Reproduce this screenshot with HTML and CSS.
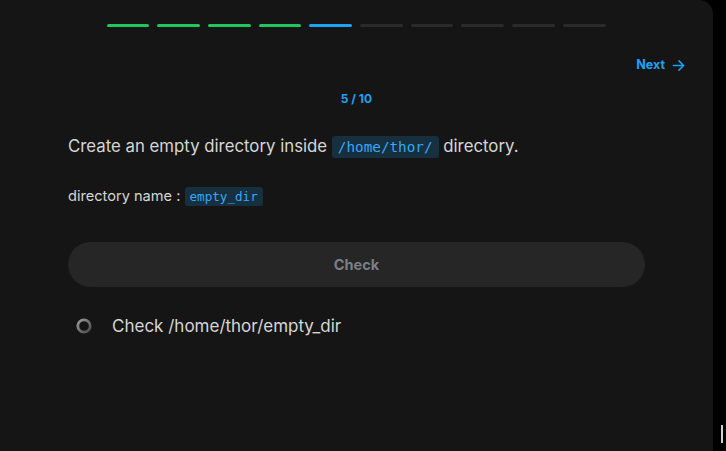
FILE: index.html
```html
<!DOCTYPE html>
<html lang="en">
<head>
<meta charset="utf-8">
<title>Task 5 / 10</title>
<link rel="stylesheet" href="styles.css">
</head>
<body>
<div class="page">
  <main class="panel">
    <div class="progress">
      <span class="bar done"></span>
      <span class="bar done"></span>
      <span class="bar done"></span>
      <span class="bar done"></span>
      <span class="bar current"></span>
      <span class="bar"></span>
      <span class="bar"></span>
      <span class="bar"></span>
      <span class="bar"></span>
      <span class="bar"></span>
    </div>
    <div class="nav">
      <a class="next" href="#">Next
        <svg class="arrow" width="13" height="13" viewBox="0 0 14 14" fill="none" stroke="currentColor" stroke-width="1.6" stroke-linecap="round" stroke-linejoin="round"><path d="M1.5 7h11M7.5 2l5 5-5 5"/></svg>
      </a>
    </div>
    <div class="counter">5 / 10</div>
    <p class="task">Create an empty directory inside <code class="chip big">/home/thor/</code> directory.</p>
    <p class="detail">directory name : <code class="chip small">empty_dir</code></p>
    <button class="check-btn" type="button">Check</button>
    <ul class="checks">
      <li class="check-item">
        <svg class="spinner" width="16" height="16" viewBox="0 0 16 16">
          <defs>
            <linearGradient id="rg" x1="0" y1="0" x2="1" y2="1">
              <stop offset="0" stop-color="#9a9a9a"/>
              <stop offset="1" stop-color="#4a4a4a"/>
            </linearGradient>
          </defs>
          <circle cx="8" cy="8" r="6.2" fill="none" stroke="url(#rg)" stroke-width="2.8"/>
        </svg>
        <span>Check /home/thor/empty_dir</span>
      </li>
    </ul>
  </main>
  <span class="caret"></span>
</div>
</body>
</html>
```
FILE: styles.css
```css
* { box-sizing: border-box; }
html, body { margin: 0; padding: 0; height: 100%; }
body {
  background: #000;
  font-family: Inter, "Noto Sans", "Liberation Sans", sans-serif;
  color: #d6d6d6;
  overflow: hidden;
}
.page {
  position: relative;
  height: 100%;
}
.panel {
  width: 713px;
  height: 100%;
  background: #151515;
  border-top-right-radius: 14px;
  padding: 24px 68px 0 68px;
  display: flex;
  flex-direction: column;
}
.progress {
  display: flex;
  gap: 8px;
  width: 499px;
  align-self: center;
  margin-right: 1px;
}
.bar {
  flex: 1;
  height: 3px;
  border-radius: 2px;
  background: #2a2a2a;
}
.bar.done { background: #22c55e; }
.bar.current { background: #1ea2f5; }
.nav {
  display: flex;
  justify-content: flex-end;
  margin-top: 30px;
  margin-right: -40px;
}
.next {
  display: flex;
  align-items: center;
  gap: 7px;
  color: #1ea2f5;
  font-weight: 700;
  font-size: 12.5px;
  text-decoration: none;
  line-height: 16px;
}
.arrow { display: block; }
.counter {
  text-align: center;
  color: #1ea2f5;
  font-weight: 700;
  font-size: 12px;
  line-height: 16px;
  margin-top: 18px;
}
.task {
  margin: 27px 0 0 0;
  font-size: 16.8px;
  line-height: 24px;
  color: #d6d6d6;
}
.chip {
  font-family: "DejaVu Sans Mono", "Liberation Mono", monospace;
  background: #16303f;
  color: #3ba7f5;
  border-radius: 3px;
}
.chip.big {
  font-size: 14.3px;
  padding: 3px 6px;
}
.chip.small {
  font-size: 12.6px;
  padding: 2px 5px;
}
.detail {
  margin: 27px 0 0 0;
  font-size: 14.6px;
  line-height: 20px;
  color: #d6d6d6;
}
.check-btn {
  margin-top: 35px;
  height: 45px;
  width: 100%;
  border: none;
  border-radius: 23px;
  background: #262626;
  color: #7a7f88;
  font-family: Inter, "Noto Sans", "Liberation Sans", sans-serif;
  font-weight: 700;
  font-size: 14.5px;
}
.checks {
  list-style: none;
  margin: 27px 0 0 0;
  padding: 0 0 0 8px;
}
.check-item {
  display: flex;
  align-items: center;
  gap: 20px;
  font-size: 17px;
  line-height: 24px;
  color: #d6d6d6;
}
.spinner { display: block; }
.caret {
  position: absolute;
  left: 721px;
  top: 425px;
  width: 2px;
  height: 18px;
  background: #d0d0d0;
}
```
